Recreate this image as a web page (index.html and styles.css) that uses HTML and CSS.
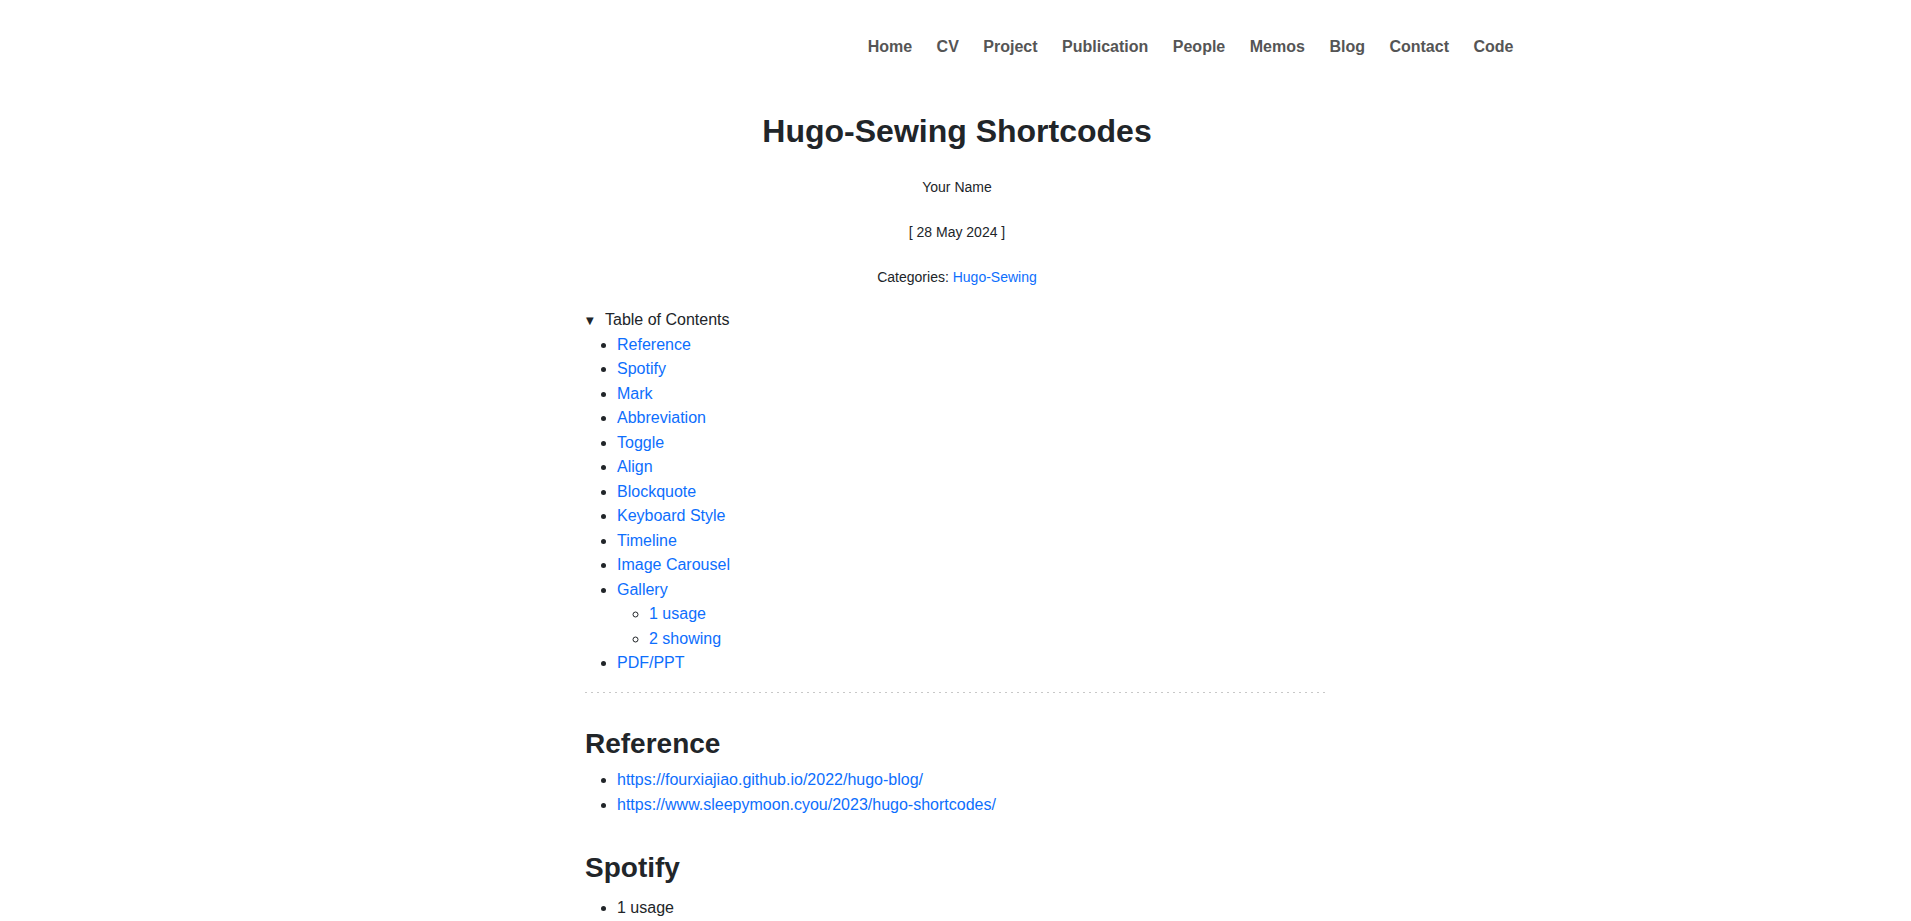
FILE: index.html
```html
<!DOCTYPE html>
<html lang="en">
<head>
<meta charset="utf-8">
<title>Hugo-Sewing Shortcodes</title>
<link rel="stylesheet" href="styles.css">
</head>
<body>
<header class="site-header">
  <nav class="nav">
    <a href="#">Home</a>
    <a href="#">CV</a>
    <a href="#">Project</a>
    <a href="#">Publication</a>
    <a href="#">People</a>
    <a href="#">Memos</a>
    <a href="#">Blog</a>
    <a href="#">Contact</a>
    <a href="#">Code</a>
  </nav>
</header>
<main class="post">
  <h1 class="post-title">Hugo-Sewing Shortcodes</h1>
  <div class="meta">
    <p>Your Name</p>
    <p>[ 28 May 2024 ]</p>
    <p>Categories: <a href="#">Hugo-Sewing</a></p>
  </div>
  <details class="toc" open>
    <summary>Table of Contents</summary>
    <ul>
      <li><a href="#reference">Reference</a></li>
      <li><a href="#spotify">Spotify</a></li>
      <li><a href="#">Mark</a></li>
      <li><a href="#">Abbreviation</a></li>
      <li><a href="#">Toggle</a></li>
      <li><a href="#">Align</a></li>
      <li><a href="#">Blockquote</a></li>
      <li><a href="#">Keyboard Style</a></li>
      <li><a href="#">Timeline</a></li>
      <li><a href="#">Image Carousel</a></li>
      <li><a href="#">Gallery</a>
        <ul>
          <li><a href="#">1 usage</a></li>
          <li><a href="#">2 showing</a></li>
        </ul>
      </li>
      <li><a href="#">PDF/PPT</a></li>
    </ul>
  </details>
  <hr class="divider">
  <h2 id="reference">Reference</h2>
  <ul>
    <li><a href="#">https://fourxiajiao.github.io/2022/hugo-blog/</a></li>
    <li><a href="#">https://www.sleepymoon.cyou/2023/hugo-shortcodes/</a></li>
  </ul>
  <h2 id="spotify">Spotify</h2>
  <ul class="spaced">
    <li>1 usage</li>
  </ul>
</main>
</body>
</html>
```
FILE: styles.css
```css
html, body {
  margin: 0;
  padding: 0;
  background: #fff;
}
body {
  font-family: "Liberation Sans", Arial, sans-serif;
  font-size: 16px;
  line-height: 24.5px;
  color: #212529;
}
a {
  color: #0d6efd;
  text-decoration: none;
}
.site-header {
  box-sizing: border-box;
  max-width: 1140px;
  margin: 0 auto;
  padding: 35px 12px 0;
}
.nav {
  display: flex;
  justify-content: flex-end;
  gap: 24.5px;
  line-height: 24px;
}
.nav a {
  color: #555;
  font-weight: bold;
}
.post {
  max-width: 744px;
  margin: 0 auto;
  padding: 53px 0 40px 3px;
}
.post-title {
  font-size: 32px;
  line-height: 38.4px;
  font-weight: bold;
  text-align: center;
  margin: 0 0 26.6px;
}
.meta {
  display: flex;
  flex-direction: column;
  gap: 24px;
  text-align: center;
  font-size: 14px;
  line-height: 21px;
  margin-bottom: 20px;
}
.meta p {
  margin: 0;
}
.toc summary {
  cursor: pointer;
  display: block;
  list-style: none;
}
.toc summary::-webkit-details-marker {
  display: none;
}
.toc summary::before {
  content: "\25BC";
  display: inline-block;
  box-sizing: border-box;
  width: 20px;
  padding-left: 1px;
  font-family: "DejaVu Sans", sans-serif;
  font-size: 10px;
  line-height: 1;
  vertical-align: 1px;
}
.post ul {
  margin: 0 0 16px;
  padding-left: 32px;
}
.post ul ul {
  margin: 0;
}
.toc ul {
  margin: 0;
}
.post ul.spaced {
  margin-top: 11px;
}
.divider {
  border: 0;
  height: 1px;
  margin: 16px 0 0;
  background: repeating-linear-gradient(to right, #c8c8c8 0 2px, transparent 2px 6px);
}
.post h2 {
  font-size: 28px;
  line-height: 33.6px;
  font-weight: bold;
  margin: 34px 0 8px;
}
```
